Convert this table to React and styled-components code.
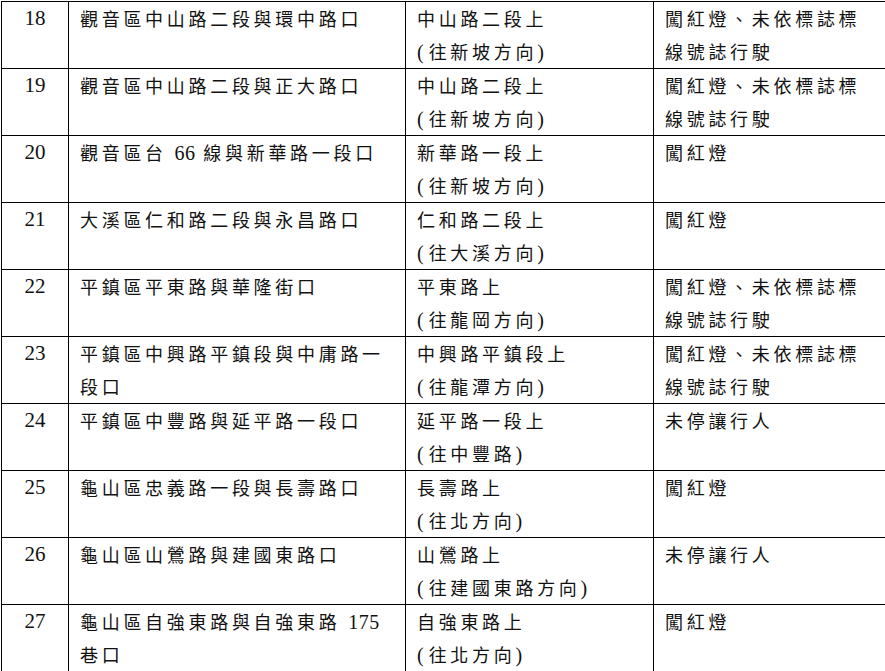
import React from "react";
import styled, { createGlobalStyle } from "styled-components";

const GlobalStyle = createGlobalStyle`
  html, body {
    margin: 0;
    padding: 0;
    background: #ffffff;
  }
  body {
    font-family: "Noto Sans CJK TC", "Noto Sans CJK SC", sans-serif;
    color: #111;
  }
`;

const rows = [
  { no: 18, place: ["觀音區中山路二段與環中路口"], road: ["中山路二段上", "(往新坡方向)"], act: ["闖紅燈、未依標誌標", "線號誌行駛"] },
  { no: 19, place: ["觀音區中山路二段與正大路口"], road: ["中山路二段上", "(往新坡方向)"], act: ["闖紅燈、未依標誌標", "線號誌行駛"] },
  { no: 20, place: ["觀音區台 66 線與新華路一段口"], road: ["新華路一段上", "(往新坡方向)"], act: ["闖紅燈"] },
  { no: 21, place: ["大溪區仁和路二段與永昌路口"], road: ["仁和路二段上", "(往大溪方向)"], act: ["闖紅燈"] },
  { no: 22, place: ["平鎮區平東路與華隆街口"], road: ["平東路上", "(往龍岡方向)"], act: ["闖紅燈、未依標誌標", "線號誌行駛"] },
  { no: 23, place: ["平鎮區中興路平鎮段與中庸路一", "段口"], road: ["中興路平鎮段上", "(往龍潭方向)"], act: ["闖紅燈、未依標誌標", "線號誌行駛"] },
  { no: 24, place: ["平鎮區中豐路與延平路一段口"], road: ["延平路一段上", "(往中豐路)"], act: ["未停讓行人"] },
  { no: 25, place: ["龜山區忠義路一段與長壽路口"], road: ["長壽路上", "(往北方向)"], act: ["闖紅燈"] },
  { no: 26, place: ["龜山區山鶯路與建國東路口"], road: ["山鶯路上", "(往建國東路方向)"], act: ["未停讓行人"] },
  { no: 27, place: ["龜山區自強東路與自強東路 175", "巷口"], road: ["自強東路上", "(往北方向)"], act: ["闖紅燈"] },
];

const Page = styled.div`
  padding: 1px 0 0 1px;
  width: 885px;
  height: 671px;
  box-sizing: border-box;
  overflow: hidden;
`;

const Table = styled.div`
  display: grid;
  grid-template-columns: 67px 337px 248px 233px;
  grid-auto-rows: 67px;
  border-top: 1px solid #000;
  border-left: 1px solid #000;
  width: max-content;
`;

const Cell = styled.div`
  box-sizing: border-box;
  border-right: 1px solid #000;
  border-bottom: 1px solid #000;
  padding: ${(p) => (p.$num ? "0" : "0 0 0 11px")};
  text-align: ${(p) => (p.$num ? "center" : "left")};
  font-family: ${(p) =>
    p.$num
      ? '"Liberation Serif", "Times New Roman", serif'
      : '"Noto Sans CJK TC", "Noto Sans CJK SC", sans-serif'};
  font-size: ${(p) => (p.$num ? "21px" : "18px")};
  letter-spacing: ${(p) => (p.$num ? "0" : "3.7px")};
  line-height: 33px;
  white-space: nowrap;
  overflow: hidden;
`;

const Line = styled.div`
  height: 33px;
`;

const Latin = styled.span`
  font-family: "Liberation Serif", "Times New Roman", serif;
  font-size: 20px;
  letter-spacing: 0.5px;
`;

const Paren = styled.span`
  font-family: "Liberation Serif", serif;
  font-size: 20px;
  letter-spacing: 5px;
`;

function renderText(text) {
  // digits and parens get the serif face, like the document
  const parts = text.split(/(\d+|\(|\))/).filter((s) => s !== "");
  return parts.map((s, i) => {
    if (/^\d+$/.test(s)) return <Latin key={i}>{s}</Latin>;
    if (s === "(" || s === ")") return <Paren key={i}>{s}</Paren>;
    return <React.Fragment key={i}>{s}</React.Fragment>;
  });
}

function Lines({ items }) {
  return items.map((t, i) => <Line key={i}>{renderText(t)}</Line>);
}

export default function App() {
  return (
    <>
      <GlobalStyle />
      <Page>
        <Table>
          {rows.map((r) => (
            <React.Fragment key={r.no}>
              <Cell $num>{r.no}</Cell>
              <Cell>
                <Lines items={r.place} />
              </Cell>
              <Cell>
                <Lines items={r.road} />
              </Cell>
              <Cell>
                <Lines items={r.act} />
              </Cell>
            </React.Fragment>
          ))}
        </Table>
      </Page>
    </>
  );
}
